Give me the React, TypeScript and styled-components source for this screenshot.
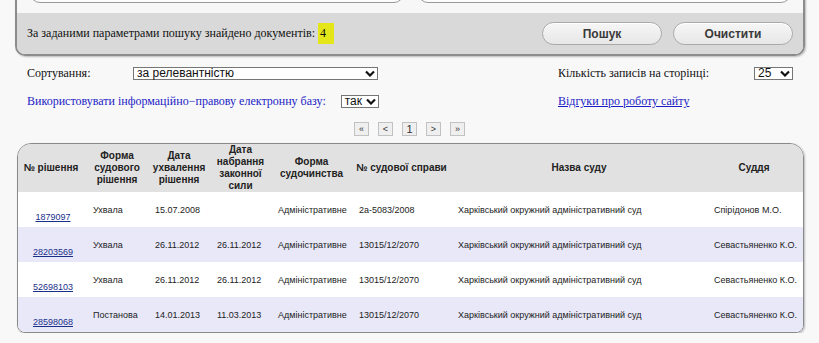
import styled, { createGlobalStyle } from 'styled-components';

const GlobalStyle = createGlobalStyle`
  html, body {
    margin: 0;
    padding: 0;
    background: #f8f8f8;
    overflow: hidden;
  }
`;

const Page = styled.div`
  width: 819px;
  font-family: 'Liberation Serif', 'Times New Roman', serif;
  color: #111;
`;

const SearchPanel = styled.div`
  margin: -28px 14px 0 15px;
  border: 2px solid #8c8c8c;
  border-top: none;
  border-radius: 0 0 10px 10px;
  overflow: hidden;
  box-shadow: 1px 1px 2px rgba(0, 0, 0, 0.25);
`;

const FieldsArea = styled.div`
  display: flex;
  gap: 14px;
  padding: 0 12px 10px 13px;
  background: #f7f7f7;
`;

const InputBox = styled.div`
  flex: 1;
  height: 31px;
  box-sizing: border-box;
  border: 1px solid #9a9a9a;
  border-radius: 10px;
  background: #fcfcfc;
`;

const ResultBar = styled.div`
  display: flex;
  align-items: center;
  height: 41px;
  padding: 0 10px;
  background: #d9d9d9;
  font-size: 12px;
`;

const ResultText = styled.div`
  flex: 1;
  line-height: 21px;
`;

const Highlight = styled.span`
  display: inline-block;
  background: #e4e61a;
  padding: 0 8px 0 2px;
  line-height: 21px;
`;

const Buttons = styled.div`
  display: flex;
  gap: 11px;
`;

const Button = styled.button`
  width: 120px;
  height: 23px;
  border: 1px solid #a9a9a9;
  border-radius: 12px;
  background: linear-gradient(#f6f6f6, #e7e7e7);
  box-shadow: inset 0 1px 0 #fff;
  font-family: 'Liberation Sans', Arial, sans-serif;
  font-weight: bold;
  font-size: 12px;
  color: #3a3a3a;
  padding: 0;
`;

const Settings = styled.div`
  display: grid;
  grid-template-columns: 531px auto;
  grid-auto-rows: 15px;
  row-gap: 13px;
  padding: 10px 0 0 27px;
  font-size: 12px;
`;

const SettingCell = styled.div`
  display: flex;
  align-items: center;
`;

const Label = styled.span<{ $width?: number; $blue?: boolean }>`
  ${(p) => (p.$width ? `width: ${p.$width}px;` : 'margin-right: 15px;')}
  color: ${(p) => (p.$blue ? '#1c1cc6' : '#111')};
  white-space: nowrap;
`;

const FeedbackLink = styled.a`
  color: #1c1cc6;
  text-decoration: underline;
  white-space: nowrap;
`;

const Select = styled.div<{ $width: number }>`
  display: flex;
  align-items: center;
  justify-content: space-between;
  box-sizing: border-box;
  width: ${(p) => p.$width}px;
  height: 13px;
  padding: 0 2px 0 3px;
  border: 1px solid #767676;
  background: #fff;
  font-family: 'Liberation Sans', Arial, sans-serif;
  font-size: 12px;
  line-height: 11px;
  color: #111;
`;

const SelectValue = styled.span`
  white-space: nowrap;
`;

const Pager = styled.div`
  display: flex;
  justify-content: center;
  gap: 9px;
  margin-top: 13px;
`;

const PageButton = styled.div<{ $current?: boolean }>`
  width: 15px;
  height: 14px;
  box-sizing: border-box;
  border: 1px solid #c2c2c2;
  background: #efefef;
  display: flex;
  align-items: center;
  justify-content: center;
  font-family: 'Liberation Sans', Arial, sans-serif;
  font-size: ${(p) => (p.$current ? '11px' : '9px')};
  color: #333;
`;

const TableFrame = styled.div`
  margin: 7px 15px 0 17px;
  border: 1px solid #8a8a8a;
  border-radius: 14px 14px 8px 8px;
  overflow: hidden;
  box-shadow: 1px 1px 2px rgba(0, 0, 0, 0.25);
`;

const Table = styled.table`
  width: 100%;
  table-layout: fixed;
  border-collapse: collapse;
  font-family: 'Liberation Sans', Arial, sans-serif;
  color: #222;
`;

const HeadCell = styled.th`
  height: 48px;
  padding: 0 4px 0 0;
  background: #e1e1e1;
  font-size: 10px;
  font-weight: bold;
  line-height: 12px;
  text-align: center;
  vertical-align: middle;
`;

const Row = styled.tr<{ $shaded: boolean }>`
  height: 35px;
  background: ${(p) => (p.$shaded ? '#e8e8f9' : '#ffffff')};
`;

const Cell = styled.td`
  padding: 0 0 0 5px;
  font-size: 9px;
  vertical-align: middle;
  white-space: nowrap;
`;

const NumberCell = styled.td`
  padding: 14px 0 0 0;
  font-size: 9px;
  text-align: center;
  vertical-align: middle;
`;

const DocLink = styled.a`
  color: #1a2f8a;
  text-decoration: underline;
`;

const Chevron = () => (
  <svg width="10" height="7" viewBox="0 0 10 7">
    <path d="M1 1.5 L5 5.5 L9 1.5" fill="none" stroke="#111" strokeWidth="2.2" />
  </svg>
);

const columns = [70, 62, 62, 61, 81, 99, 256, 94];

const headers = [
  ['№ рішення'],
  ['Форма', 'судового', 'рішення'],
  ['Дата', 'ухвалення', 'рішення'],
  ['Дата', 'набрання', 'законної', 'сили'],
  ['Форма', 'судочинства'],
  ['№ судової справи'],
  ['Назва суду'],
  ['Суддя'],
];

const rows = [
  ['1879097', 'Ухвала', '15.07.2008', '', 'Адміністративне', '2а-5083/2008', 'Харківський окружний адміністративний суд', 'Спірідонов М.О.'],
  ['28203569', 'Ухвала', '26.11.2012', '26.11.2012', 'Адміністративне', '13015/12/2070', 'Харківський окружний адміністративний суд', 'Севастьяненко К.О.'],
  ['52698103', 'Ухвала', '26.11.2012', '26.11.2012', 'Адміністративне', '13015/12/2070', 'Харківський окружний адміністративний суд', 'Севастьяненко К.О.'],
  ['28598068', 'Постанова', '14.01.2013', '11.03.2013', 'Адміністративне', '13015/12/2070', 'Харківський окружний адміністративний суд', 'Севастьяненко К.О.'],
];

export default function App() {
  return (
    <Page>
      <GlobalStyle />
      <SearchPanel>
        <FieldsArea>
          <InputBox />
          <InputBox />
        </FieldsArea>
        <ResultBar>
          <ResultText>
            За заданими параметрами пошуку знайдено документів: <Highlight>4</Highlight>
          </ResultText>
          <Buttons>
            <Button>Пошук</Button>
            <Button>Очистити</Button>
          </Buttons>
        </ResultBar>
      </SearchPanel>

      <Settings>
        <SettingCell>
          <Label $width={106}>Сортування:</Label>
          <Select $width={245}>
            <SelectValue>за релевантністю</SelectValue>
            <Chevron />
          </Select>
        </SettingCell>
        <SettingCell>
          <Label $width={196}>Кількість записів на сторінці:</Label>
          <Select $width={39}>
            <SelectValue>25</SelectValue>
            <Chevron />
          </Select>
        </SettingCell>
        <SettingCell>
          <Label $blue>Використовувати інформаційно−правову електронну базу:</Label>
          <Select $width={38}>
            <SelectValue>так</SelectValue>
            <Chevron />
          </Select>
        </SettingCell>
        <SettingCell>
          <FeedbackLink href="#">Відгуки про роботу сайту</FeedbackLink>
        </SettingCell>
      </Settings>

      <Pager>
        <PageButton>«</PageButton>
        <PageButton>&lt;</PageButton>
        <PageButton $current>1</PageButton>
        <PageButton>&gt;</PageButton>
        <PageButton>»</PageButton>
      </Pager>

      <TableFrame>
        <Table>
          <colgroup>
            {columns.map((w, i) => (
              <col key={i} style={{ width: w }} />
            ))}
          </colgroup>
          <thead>
            <tr>
              {headers.map((lines, i) => (
                <HeadCell key={i}>
                  {lines.map((l, j) => (
                    <div key={j}>{l}</div>
                  ))}
                </HeadCell>
              ))}
            </tr>
          </thead>
          <tbody>
            {rows.map((r, i) => (
              <Row key={r[0]} $shaded={i % 2 === 1}>
                <NumberCell>
                  <DocLink href="#">{r[0]}</DocLink>
                </NumberCell>
                {r.slice(1).map((v, j) => (
                  <Cell key={j}>{v}</Cell>
                ))}
              </Row>
            ))}
          </tbody>
        </Table>
      </TableFrame>
    </Page>
  );
}
